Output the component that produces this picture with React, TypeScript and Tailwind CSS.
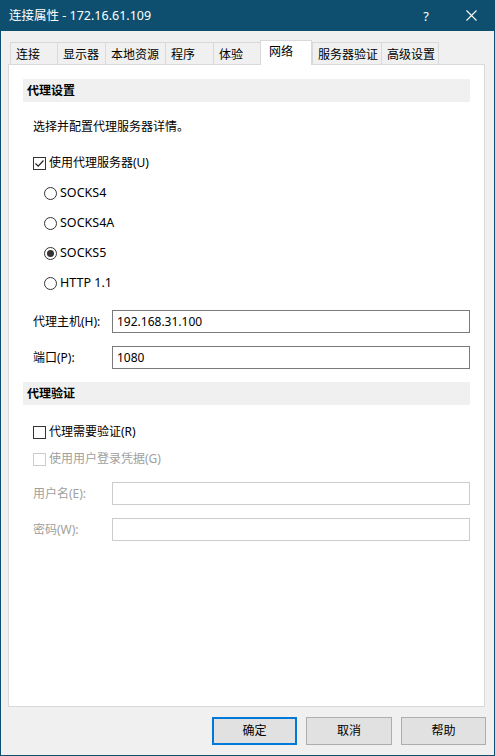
import React from "react";

const font = { fontFamily: '"Noto Sans", "Noto Sans CJK SC", sans-serif' };

const tabs = [
  { label: "连接", w: "w-[47px]" },
  { label: "显示器", w: "w-[48px]" },
  { label: "本地资源", w: "w-[60px]" },
  { label: "程序", w: "w-[48px]" },
  { label: "体验", w: "w-[47px]" },
  { label: "网络", w: "w-[52px]", active: true },
  { label: "服务器验证", w: "w-[69px]" },
  { label: "高级设置", w: "w-[58px]" },
];

function Checkbox({ checked, disabled }: { checked?: boolean; disabled?: boolean }) {
  return (
    <span
      className={
        "flex h-[13px] w-[13px] shrink-0 items-center justify-center border bg-white " +
        (disabled ? "border-[#cccccc]" : "border-[#333333]")
      }
    >
      {checked && (
        <svg width="11" height="11" viewBox="0 0 11 11">
          <path d="M1.5 5.5 L4.2 8.2 L9.5 2.5" fill="none" stroke="#222" strokeWidth="1.2" />
        </svg>
      )}
    </span>
  );
}

function Radio({ checked }: { checked?: boolean }) {
  return (
    <span className="flex h-[13px] w-[13px] shrink-0 items-center justify-center rounded-full border border-[#333333] bg-white">
      {checked && <span className="h-[7px] w-[7px] rounded-full bg-[#333333]" />}
    </span>
  );
}

function SectionHeader({ title, className }: { title: string; className?: string }) {
  return (
    <div className={"flex h-[23px] items-center bg-[#f0f0f0] pl-[4px] font-bold " + (className ?? "")}>
      {title}
    </div>
  );
}

function FieldRow({
  label,
  value,
  disabled,
  className,
}: {
  label: string;
  value?: string;
  disabled?: boolean;
  className?: string;
}) {
  return (
    <div className={"flex h-[23px] items-center " + (className ?? "")}>
      <span className={"w-[89px] shrink-0 pl-[10px] " + (disabled ? "text-[#a0a0a0]" : "")}>{label}</span>
      <div
        className={
          "flex h-[23px] flex-1 items-center border bg-white pl-[4px] " +
          (disabled ? "border-[#cccccc]" : "border-[#7a7a7a]")
        }
      >
        {value}
      </div>
    </div>
  );
}

export default function App() {
  return (
    <div className="flex h-[756px] w-[495px] flex-col text-[12px] leading-[16px] text-black" style={font}>
      {/* title bar */}
      <div className="flex h-[31px] shrink-0 items-center bg-[#0e4f70] text-white">
        <span className="pl-[9px] text-[12.5px]">连接属性 - 172.16.61.109</span>
        <span className="ml-auto mr-[37px] text-[13px]">?</span>
        <svg width="11" height="11" viewBox="0 0 11 11" className="mr-[18px]">
          <path d="M0.5 0.5 L10.5 10.5 M10.5 0.5 L0.5 10.5" stroke="#fff" strokeWidth="1.1" />
        </svg>
      </div>

      {/* body */}
      <div className="flex flex-1 flex-col border-x border-b border-[#0e4f70] bg-[#f0f0f0] px-[7px]">
        {/* tabs */}
        <div className="flex h-[33px] items-end pl-[2px]">
          {tabs.map((t, i) => (
            <div
              key={t.label}
              className={
                t.w +
                " flex shrink-0 border-[#d9d9d9] pl-[5px] " +
                (t.active
                  ? "relative z-10 -mb-px h-[25px] items-start border-x border-t bg-white pt-[3px] pl-[8px]"
                  : "h-[22px] items-center border-t border-l bg-[#f0f0f0] pt-[2px] " +
                    (i === tabs.length - 1 ? "border-r" : ""))
              }
            >
              {t.label}
            </div>
          ))}
        </div>

        {/* panel */}
        <div className="mr-[2px] flex h-[643px] flex-col border border-[#d9d9d9] bg-white px-[14px] pt-[14px]">
          <SectionHeader title="代理设置" />
          <div className="mt-[13px] flex h-[24px] items-center pl-[10px]">选择并配置代理服务器详情。</div>
          <div className="mt-[12px] flex h-[24px] items-center gap-[3px] pl-[10px]">
            <Checkbox checked />
            <span>使用代理服务器(U)</span>
          </div>
          <div className="mt-[6px] flex flex-col gap-[6px] pl-[21px]">
            {["SOCKS4", "SOCKS4A", "SOCKS5", "HTTP 1.1"].map((r) => (
              <div key={r} className="flex h-[24px] items-center gap-[3px]">
                <Radio checked={r === "SOCKS5"} />
                <span className="text-[12.5px]">{r}</span>
              </div>
            ))}
          </div>
          <FieldRow className="mt-[15px]" label="代理主机(H):" value="192.168.31.100" />
          <FieldRow className="mt-[13px]" label="端口(P):" value="1080" />
          <SectionHeader className="mt-[13px]" title="代理验证" />
          <div className="mt-[15px] flex h-[24px] items-center gap-[3px] pl-[10px]">
            <Checkbox />
            <span>代理需要验证(R)</span>
          </div>
          <div className="mt-[3px] flex h-[24px] items-center gap-[3px] pl-[10px] text-[#a0a0a0]">
            <Checkbox disabled />
            <span>使用用户登录凭据(G)</span>
          </div>
          <FieldRow className="mt-[11px]" label="用户名(E):" disabled />
          <FieldRow className="mt-[13px]" label="密码(W):" disabled />
        </div>

        {/* footer buttons */}
        <div className="flex justify-end gap-[9px] pt-[10px] pr-[1px]">
          <button className="flex h-[28px] w-[85px] items-center justify-center border-2 border-[#0078d7] bg-[#e1e1e1]">
            确定
          </button>
          <button className="flex h-[28px] w-[86px] items-center justify-center border border-[#adadad] bg-[#e1e1e1]">
            取消
          </button>
          <button className="flex h-[28px] w-[85px] items-center justify-center border border-[#adadad] bg-[#e1e1e1]">
            帮助
          </button>
        </div>
      </div>
    </div>
  );
}
